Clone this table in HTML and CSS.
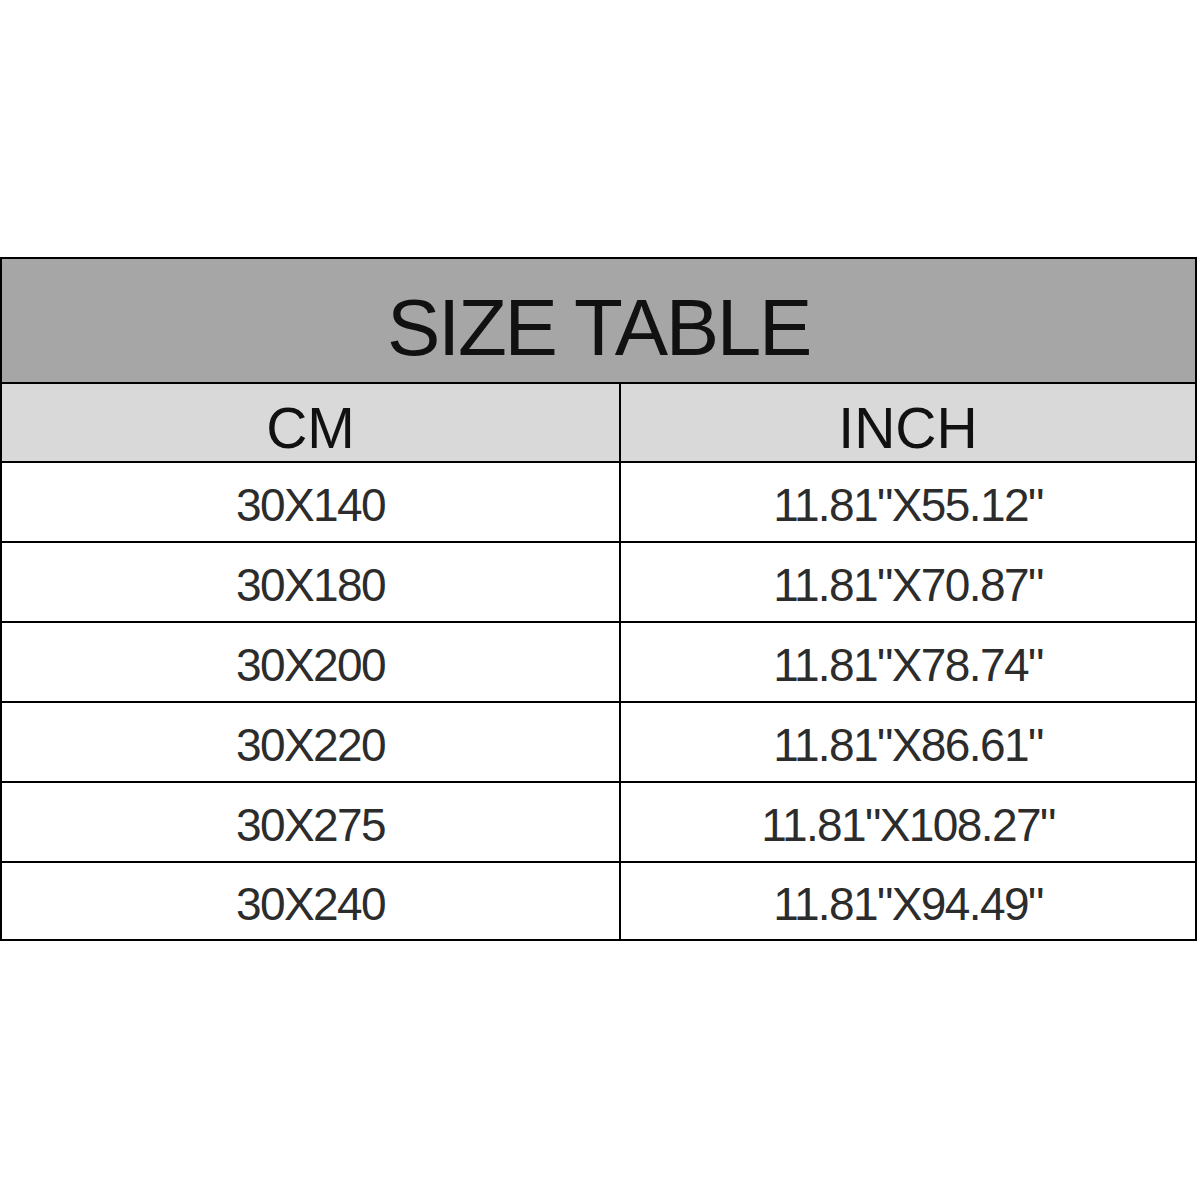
FILE: index.html
```html
<!DOCTYPE html>
<html>
<head>
<meta charset="utf-8">
<link rel="stylesheet" href="styles.css">
</head>
<body>
<div class="table">
  <div class="title">SIZE TABLE</div>
  <div class="row head">
    <div class="cell">CM</div>
    <div class="cell">INCH</div>
  </div>
  <div class="row">
    <div class="cell">30X140</div>
    <div class="cell">11.81"X55.12"</div>
  </div>
  <div class="row">
    <div class="cell">30X180</div>
    <div class="cell">11.81"X70.87"</div>
  </div>
  <div class="row">
    <div class="cell">30X200</div>
    <div class="cell">11.81"X78.74"</div>
  </div>
  <div class="row">
    <div class="cell">30X220</div>
    <div class="cell">11.81"X86.61"</div>
  </div>
  <div class="row">
    <div class="cell">30X275</div>
    <div class="cell">11.81"X108.27"</div>
  </div>
  <div class="row last">
    <div class="cell">30X240</div>
    <div class="cell">11.81"X94.49"</div>
  </div>
</div>
</body>
</html>
```

FILE: styles.css
```css
html, body {
  margin: 0;
  padding: 0;
  background: #ffffff;
}
body {
  padding-top: 257px;
  font-family: "Liberation Sans", Arial, sans-serif;
}
.table {
  width: 1193px;
  border: 2px solid #000;
}
.title {
  height: 125px;
  background: #a6a6a6;
  border-bottom: 2px solid #000;
  display: flex;
  align-items: center;
  justify-content: center;
  font-size: 80px;
  letter-spacing: -2.3px;
  color: #111;
  padding-top: 14px;
  box-sizing: border-box;
}
.row {
  display: grid;
  grid-template-columns: 619px 1fr;
  height: 78px;
  border-bottom: 2px solid #000;
}
.row.last {
  border-bottom: none;
  height: 76px;
}
.cell {
  display: flex;
  align-items: center;
  justify-content: center;
  font-size: 46px;
  letter-spacing: -1.6px;
  color: #2c2c2c;
  padding-top: 6px;
  box-sizing: border-box;
}
.cell:first-child {
  border-right: 2px solid #000;
}
.head {
  height: 77px;
  background: #d9d9d9;
}
.head .cell {
  font-size: 57px;
  letter-spacing: 0;
  color: #111;
  padding-top: 10px;
}
```
